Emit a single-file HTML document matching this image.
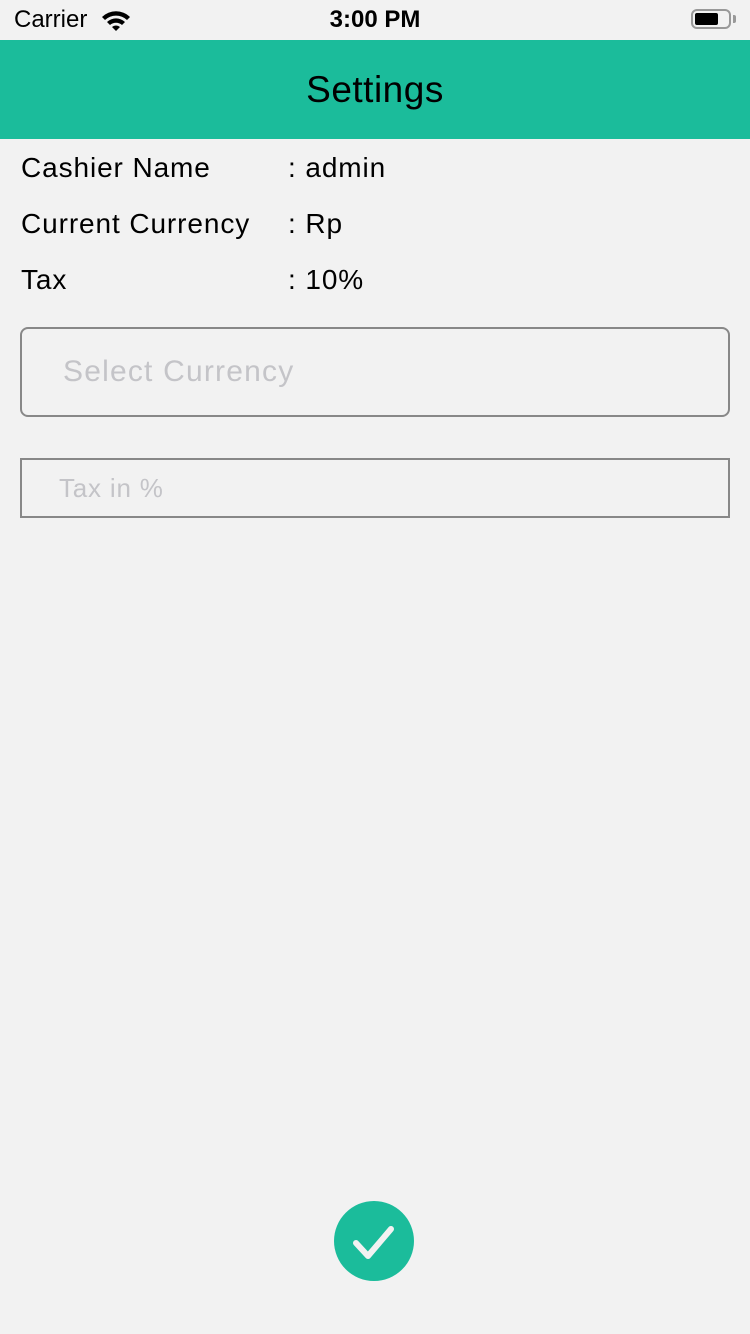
<!DOCTYPE html>
<html><head><style>
body{margin:0;width:750px;height:1334px;background:#f2f2f2;font-family:"Liberation Sans",sans-serif;position:relative;overflow:hidden}
.a{position:absolute;white-space:nowrap}
.t{font-size:28px;letter-spacing:0.9px}
</style></head><body>
<div class="a" style="left:14px;top:6px;font-size:24px">Carrier</div>
<svg class="a" style="left:100px;top:9px" width="32" height="24" viewBox="0 0 32 24"><path d="M2 8 A20 20 0 0 1 30 8 L27 11 A16 16 0 0 0 5 11Z M7 13 A13 13 0 0 1 25 13 L22 16 A9 9 0 0 0 10 16Z M12 18 A6 6 0 0 1 20 18 L16 22Z" fill="#000"/></svg>
<div class="a" style="left:0;width:750px;text-align:center;top:6px;font-size:24px;font-weight:bold">3:00 PM</div>
<div class="a" style="left:691px;top:9px;width:40px;height:20px;border:2px solid #999;border-radius:6px;box-sizing:border-box"></div>
<div class="a" style="left:695px;top:13px;width:23px;height:12px;background:#000;border-radius:2px"></div>
<div class="a" style="left:733px;top:15px;width:3px;height:8px;background:#999;border-radius:0 2px 2px 0"></div>
<div class="a" style="left:0;top:40px;width:750px;height:99px;background:#1bbc9b"></div>
<div class="a" style="left:0;width:750px;text-align:center;top:69px;font-size:37px;letter-spacing:0.5px">Settings</div>
<div class="a t" style="left:21px;top:152px">Cashier Name</div>
<div class="a t" style="left:288px;top:152px">: admin</div>
<div class="a t" style="left:21px;top:208px">Current Currency</div>
<div class="a t" style="left:288px;top:208px">: Rp</div>
<div class="a t" style="left:21px;top:264px">Tax</div>
<div class="a t" style="left:288px;top:264px">: 10%</div>
<div class="a" style="left:20px;top:327px;width:710px;height:90px;border:2px solid #888;border-radius:8px;box-sizing:border-box"></div>
<div class="a" style="left:63px;top:355px;font-size:30px;letter-spacing:1.2px;color:#c4c4c8">Select Currency</div>
<div class="a" style="left:20px;top:458px;width:710px;height:60px;border:2px solid #888;box-sizing:border-box"></div>
<div class="a" style="left:59px;top:473px;font-size:26px;letter-spacing:0.8px;color:#c4c4c8">Tax in %</div>
<svg class="a" style="left:334px;top:1201px" width="80" height="80" viewBox="0 0 80 80"><circle cx="40" cy="40" r="40" fill="#1bbc9b"/><path d="M22 42 L34 55 L57 28" fill="none" stroke="#f2f2f2" stroke-width="6" stroke-linecap="round" stroke-linejoin="round"/></svg>
</body></html>
